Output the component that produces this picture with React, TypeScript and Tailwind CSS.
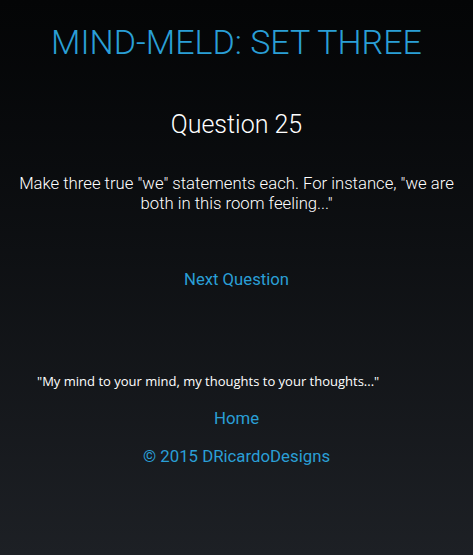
export default function App() {
  return (
    <div className="min-h-[555px] w-full bg-gradient-to-b from-[#040506] to-[#1d2025] font-['Roboto',sans-serif] text-center">
      {/* Header */}
      <h1 className="pt-[22px] text-[34px] leading-[40px] font-light text-[#2a9fd6]">
        MIND-MELD: SET THREE
      </h1>

      {/* Question */}
      <h2 className="mt-[48px] text-[25px] leading-[30px] font-light text-white">Question 25</h2>
      <p className="mt-[34px] px-[14px] text-[16.7px] leading-[20px] font-light text-white">
        Make three true "we" statements each. For instance, "we are both in this room feeling..."
      </p>

      <div className="mt-[54px]">
        <a href="#" className="text-[16.7px] leading-[20px] text-[#2a9fd6]">Next Question</a>
      </div>

      {/* Footer */}
      <footer className="mt-[80px] pb-[80px]">
        <p className="pl-[37px] text-left font-['Open_Sans',sans-serif] text-[13px] leading-[18px] text-white">
          "My mind to your mind, my thoughts to your thoughts..."
        </p>
        <div className="mt-[17px]">
          <a href="#" className="text-[16.8px] leading-[20px] text-[#2a9fd6]">Home</a>
        </div>
        <p className="mt-[15px] text-[16.8px] leading-[20px] text-[#2a9fd6]">© 2015 DRicardoDesigns</p>
      </footer>
    </div>
  )
}
